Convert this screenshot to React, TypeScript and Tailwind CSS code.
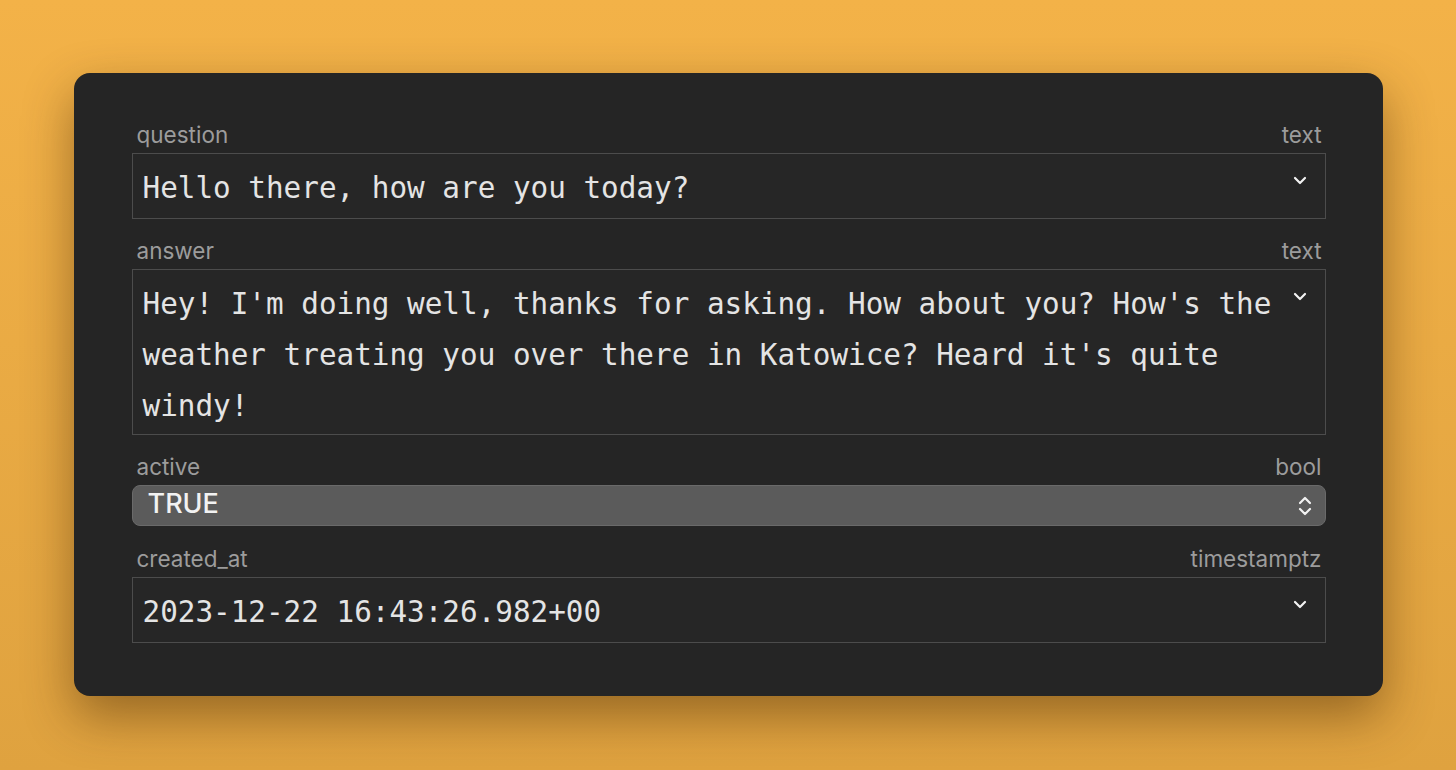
import React from "react";

function Chevron() {
  return (
    <svg width="14" height="9" viewBox="0 0 14 9" fill="none" className="shrink-0">
      <path d="M2 2l5 5 5-5" stroke="#f2f2f2" strokeWidth="2.2" strokeLinecap="round" strokeLinejoin="round" />
    </svg>
  );
}

function UpDown() {
  return (
    <svg width="16" height="24" viewBox="0 0 16 24" fill="none" className="shrink-0">
      <path d="M3 9l5-5 5 5" stroke="#f2f2f2" strokeWidth="2.2" strokeLinecap="round" strokeLinejoin="round" />
      <path d="M3 15l5 5 5-5" stroke="#f2f2f2" strokeWidth="2.2" strokeLinecap="round" strokeLinejoin="round" />
    </svg>
  );
}

function Label({ name, type }: { name: string; type: string }) {
  return (
    <div className="flex justify-between pl-[5px] pr-[4px] h-[24px] leading-[25px] mb-[7px] text-[22.5px] text-[#9c9c9c] font-['Inter',sans-serif]">
      <span>{name}</span>
      <span>{type}</span>
    </div>
  );
}

function TextField({ name, type, value, multi }: { name: string; type: string; value: string; multi?: boolean }) {
  return (
    <div>
      <Label name={name} type={type} />
      <div
        className={
          multi
            ? "relative border border-[#4c4c4c] bg-[#262626] pl-[10px] pr-[30px] pt-[9px] pb-[2px]"
            : "relative border border-[#4c4c4c] bg-[#262626] pl-[10px] pr-[30px] pt-[9px] pb-[4px]"
        }
      >
        <p className="text-[29.3px] leading-[51px] text-[#e4e4e4] font-['DejaVu_Sans_Mono',monospace]">
          {value}
        </p>
        <div className="absolute right-[18px] top-[22px]">
          <Chevron />
        </div>
      </div>
    </div>
  );
}

export default function App() {
  return (
    <div className="min-h-[770px] w-full bg-gradient-to-b from-[#f3b248] to-[#dfa23f] flex justify-center items-start pt-[73px]">
      <div className="w-[1309px] rounded-[16px] bg-[#252525] pl-[58px] pr-[57px] pt-[49px] pb-[53px] shadow-[0_20px_50px_rgba(60,30,0,0.45)] flex flex-col gap-[19px]">
        <TextField name="question" type="text" value="Hello there, how are you today?" />
        <TextField
          name="answer"
          type="text"
          multi
          value="Hey! I'm doing well, thanks for asking. How about you? How's the weather treating you over there in Katowice? Heard it's quite windy!"
        />
        <div>
          <Label name="active" type="bool" />
          <div className="h-[41px] rounded-[8px] bg-[#5b5b5b] border border-[#6a6a6a] flex items-center justify-between pl-[15px] pr-[12px]">
            <span className="text-[27px] leading-[36px] pb-[4px] text-[#f2f2f2] font-['Inter',sans-serif] font-medium">TRUE</span>
            <UpDown />
          </div>
        </div>
        <div className="mt-[1px]">
          <TextField name="created_at" type="timestamptz" value="2023-12-22 16:43:26.982+00" />
        </div>
      </div>
    </div>
  );
}
